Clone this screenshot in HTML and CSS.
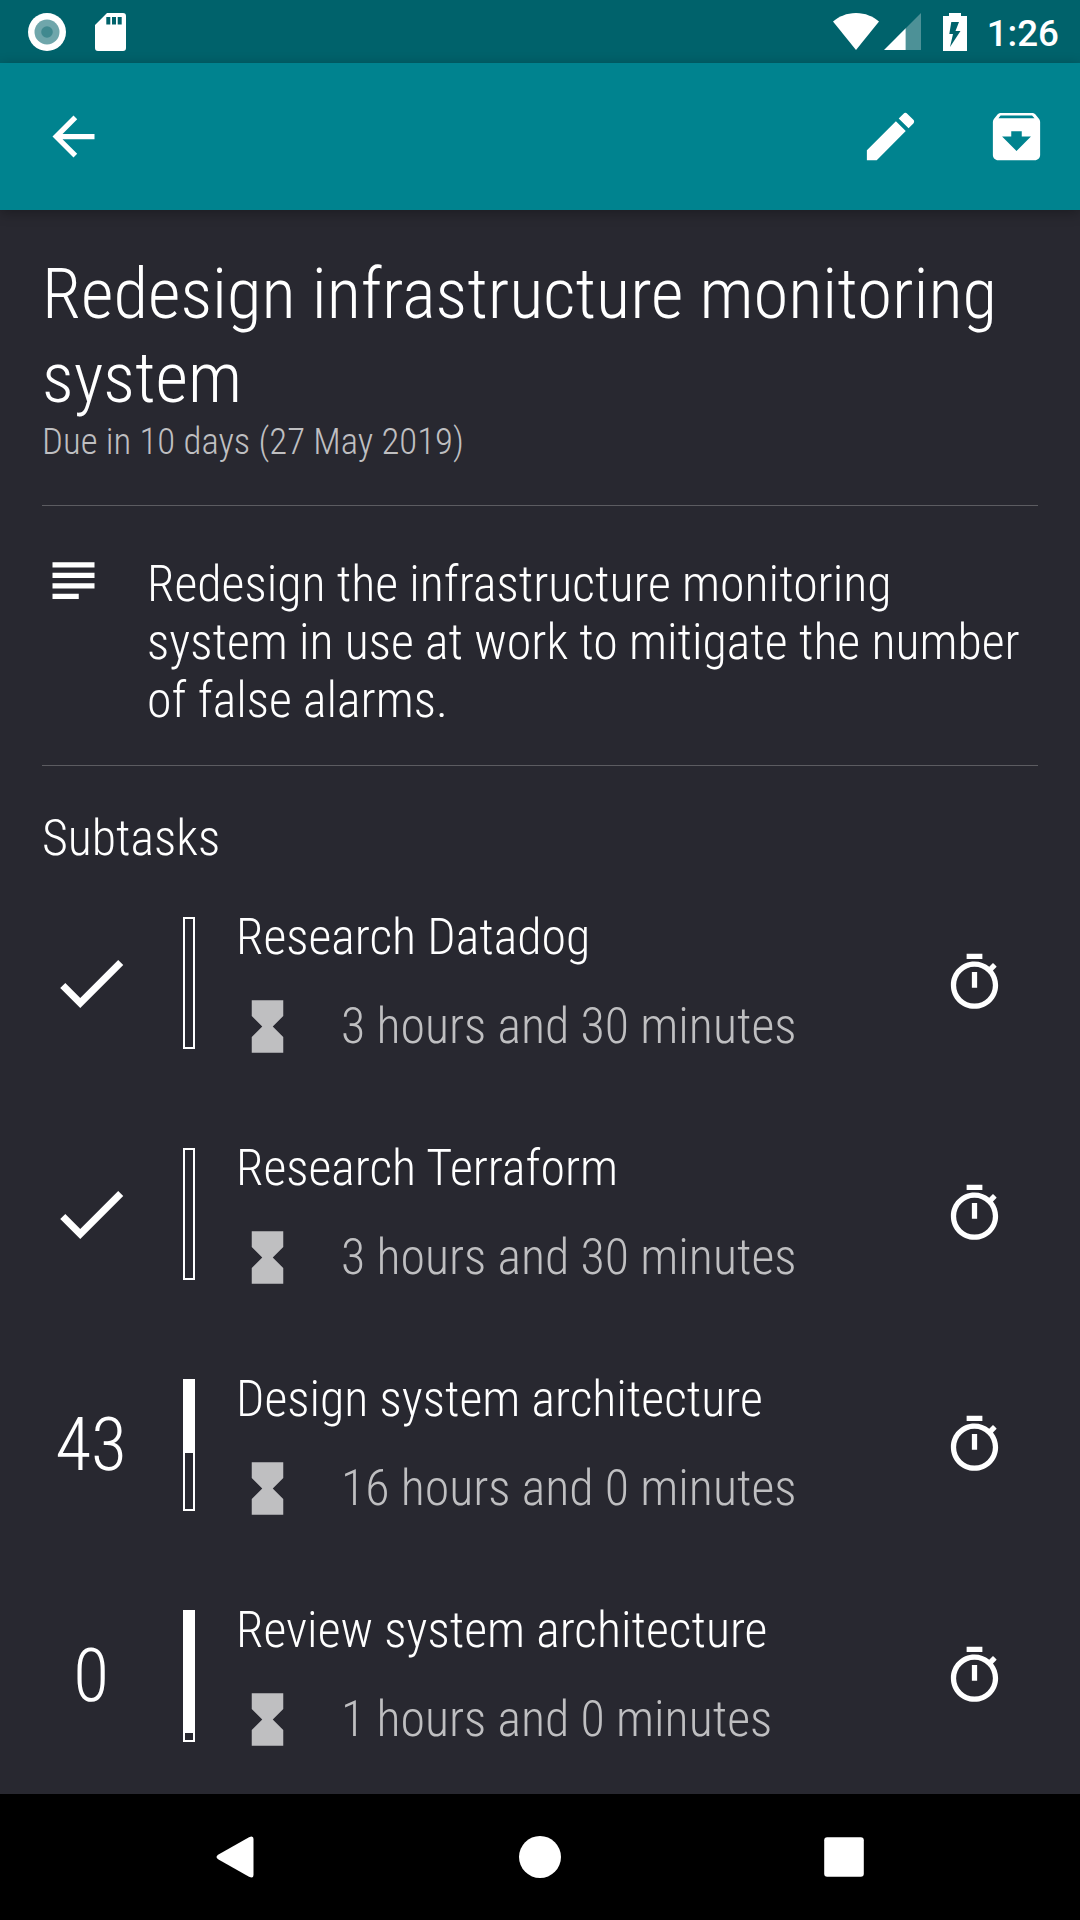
FILE: index.html
```html
<!DOCTYPE html>
<html lang="en">
<head>
<meta charset="utf-8">
<title>Task details</title>
<link rel="stylesheet" href="styles.css">
</head>
<body>
<svg class="defs" aria-hidden="true">
  <symbol id="check" viewBox="0 0 24 24"><path d="M9 16.17L4.83 12l-1.42 1.41L9 19 21 7l-1.41-1.41z"/></symbol>
  <symbol id="hourglass" viewBox="0 0 24 24"><path d="M6 2v6h.01L6 8.01 10 12l-4 4 .01.01H6V22h12v-5.99h-.01L18 16l-4-4 4-3.99-.01-.01H18V2z"/></symbol>
  <symbol id="timer" viewBox="0 0 24 24"><path d="M15 1H9v2h6V1zm-4 13h2V8h-2v6zm8.03-6.61l1.42-1.42c-.43-.51-.9-.99-1.41-1.41l-1.42 1.42C16.07 4.74 14.12 4 12 4c-4.97 0-9 4.03-9 9s4.02 9 9 9 9-4.03 9-9c0-2.12-.74-4.07-1.97-5.61zM12 20c-3.87 0-7-3.13-7-7s3.13-7 7-7 7 3.13 7 7-3.13 7-7 7z"/></symbol>
</svg>

<div class="statusbar">
  <svg class="st-record" viewBox="0 0 38 38"><circle cx="19" cy="19" r="19"/><circle class="ring" cx="19" cy="19" r="12.5"/><circle class="dot" cx="19" cy="19" r="5.8"/></svg>
  <svg class="st-sd" viewBox="0 0 31 38"><path fill-rule="evenodd" d="M12 0H28a3 3 0 0 1 3 3V35a3 3 0 0 1-3 3H3a3 3 0 0 1-3-3V12ZM11.3 4v7.5h4V4ZM17 4v7.5h4V4ZM22.700 4v7.500h4V4Z"/></svg>
  <span class="spacer"></span>
  <svg class="st-wifi" viewBox="0 0 46 37"><path d="M23 37L0 8.500C6 3.500 13.500 0 23 0S40 3.500 46 8.500Z"/></svg>
  <svg class="st-signal" viewBox="0 0 37 37"><path class="faint" d="M37 0V37H21.500V15.500Z"/><path d="M21.700 15.300V37H0Z"/></svg>
  <svg class="st-battery" viewBox="0 0 24 38"><path fill-rule="evenodd" d="M6 0H18V3H24V38H0V3H6ZM8.300 9L6.300 21H10L7 34L17.500 18H12.500L16 9Z"/></svg>
  <span class="clock">1:26</span>
</div>

<header class="appbar">
  <svg class="icon" viewBox="0 0 24 24"><path d="M20 11H7.830l5.590-5.590L12 4l-8 8 8 8 1.410-1.410L7.830 13H20v-2z"/></svg>
  <span class="spacer"></span>
  <svg class="icon" viewBox="0 0 24 24"><path d="M3 17.250V21h3.750L17.810 9.940l-3.750-3.750L3 17.250zM20.710 7.040c.39-.39.39-1.020 0-1.410l-2.340-2.340c-.39-.39-1.020-.39-1.410 0l-1.830 1.830 3.750 3.750 1.830-1.830z"/></svg>
  <svg class="icon archive" viewBox="0 0 24 24"><path d="M20.540 5.230l-1.390-1.680C18.880 3.210 18.470 3 18 3H6c-.47 0-.88.21-1.160.55L3.460 5.230C3.170 5.570 3 6.020 3 6.500V19c0 1.100.9 2 2 2h14c1.100 0 2-.9 2-2V6.500c0-.48-.17-.93-.46-1.270zM12 17.500L6.500 12H10v-2h4v2h3.500L12 17.500zM5.120 5l.81-1h12l.94 1H5.120z"/></svg>
</header>

<main class="content">
  <section class="heading">
    <h1>Redesign infrastructure monitoring system</h1>
    <p class="due">Due in 10 days (27 May 2019)</p>
  </section>

  <section class="description">
    <svg class="icon" viewBox="0 0 24 24"><path d="M4 5h16v2H4zM4 9h16v2H4zM4 13h16v2H4zM4 17h10v2H4z"/></svg>
    <p>Redesign the infrastructure monitoring system in use at work to mitigate the number of false alarms.</p>
  </section>

  <section class="subtasks">
    <h2>Subtasks</h2>
    <ul>
      <li class="task">
        <div class="state"><svg class="check"><use href="#check"/></svg></div>
        <div class="bar"><div class="fill" style="height:0%"></div></div>
        <div class="info">
          <p class="name">Research Datadog</p>
          <p class="time"><svg class="icon"><use href="#hourglass"/></svg>3 hours and 30 minutes</p>
        </div>
        <svg class="icon"><use href="#timer"/></svg>
      </li>
      <li class="task">
        <div class="state"><svg class="check"><use href="#check"/></svg></div>
        <div class="bar"><div class="fill" style="height:0%"></div></div>
        <div class="info">
          <p class="name">Research Terraform</p>
          <p class="time"><svg class="icon"><use href="#hourglass"/></svg>3 hours and 30 minutes</p>
        </div>
        <svg class="icon"><use href="#timer"/></svg>
      </li>
      <li class="task">
        <div class="state">43</div>
        <div class="bar"><div class="fill" style="height:57%"></div></div>
        <div class="info">
          <p class="name">Design system architecture</p>
          <p class="time"><svg class="icon"><use href="#hourglass"/></svg>16 hours and 0 minutes</p>
        </div>
        <svg class="icon"><use href="#timer"/></svg>
      </li>
      <li class="task">
        <div class="state">0</div>
        <div class="bar"><div class="fill" style="height:95%"></div></div>
        <div class="info">
          <p class="name">Review system architecture</p>
          <p class="time"><svg class="icon"><use href="#hourglass"/></svg>1 hours and 0 minutes</p>
        </div>
        <svg class="icon"><use href="#timer"/></svg>
      </li>
    </ul>
  </section>
</main>

<nav class="navbar">
  <svg viewBox="0 0 42 42"><path d="M3.500 18.500L34 1.200Q38.500-1 38.500 3V39Q38.500 43 34 40.800L3.500 23.500Q-.5 21 3.500 18.500Z"/></svg>
  <svg viewBox="0 0 42 42"><circle cx="21" cy="21" r="21"/></svg>
  <svg viewBox="0 0 42 42"><rect x="1.200" y="1.200" width="39.600" height="39.600" rx="3"/></svg>
</nav>
</body>
</html>
```
FILE: styles.css
```css
* { box-sizing: border-box; margin: 0; padding: 0; }

body {
  width: 1080px;
  height: 1920px;
  display: flex;
  flex-direction: column;
  overflow: hidden;
  background: #282830;
  color: #fff;
  font-family: "Roboto Condensed", Roboto, sans-serif;
  font-weight: 300;
  font-stretch: 75%;
}

svg { display: block; flex: none; fill: currentColor; }
.defs { display: none; }
.spacer { flex: 1; }
.icon { width: 63px; height: 63px; }

/* System status bar */
.statusbar {
  height: 63px;
  flex: none;
  display: flex;
  align-items: center;
  padding: 0 21px 0 28px;
  background: #00626b;
}
.st-record { width: 38px; height: 38px; }
.st-record .ring { fill: #6fa6ab; }
.st-record .dot { fill: #40898f; }
.st-sd { width: 31px; height: 38px; margin-left: 29px; }
.st-wifi { width: 46px; height: 37px; }
.st-signal { width: 37px; height: 37px; margin-left: 5px; }
.st-signal .faint { fill-opacity: .3; }
.st-battery { width: 24px; height: 38px; margin-left: 22px; }
.clock {
  margin-left: 20px;
  font: 500 36.750px/63px Roboto, sans-serif;
  font-stretch: 100%;
  padding-top: 3px;
}

/* App bar */
.appbar {
  height: 147px;
  flex: none;
  display: flex;
  align-items: center;
  padding: 0 32px 0 42px;
  background: #00838f;
  box-shadow: 0 3px 12px rgba(0, 0, 0, .3);
  z-index: 1;
}
.archive { margin-left: 63px; }

/* Task details */
.content { flex: 1; padding: 0 42px; }

.heading {
  height: 296px;
  padding-top: 42px;
  border-bottom: 1px solid #5c5c61;
}
h1 { font-size: 70.875px; font-weight: 300; line-height: 84px; }
.due { font-size: 36.750px; line-height: 43px; color: #bfbfc1; }

.description {
  height: 260px;
  display: flex;
  gap: 42px;
  padding-top: 43px;
  border-bottom: 1px solid #5c5c61;
}
.description p { width: 891px; flex: none; font-size: 49.875px; line-height: 58px; padding-top: 6px; }

h2 { font-size: 49.875px; font-weight: 300; line-height: 58px; padding-top: 43px; }
.subtasks ul { list-style: none; }
.task {
  height: 231px;
  display: flex;
  align-items: center;
  padding-right: 32px;
}
.state {
  width: 98px;
  display: flex;
  justify-content: center;
  font-size: 73.500px;
  line-height: 86px;
}
.check { width: 86px; height: 86px; }
.bar { width: 12px; height: 132px; margin-left: 43px; border: 2px solid #fff; }
.fill { background: #fff; }
.info {
  flex: 1;
  margin-left: 41px;
  font-size: 49.875px;
  line-height: 58px;
}
.time { display: flex; align-items: center; gap: 42px; margin-top: 29px; color: #bfbfc1; }

/* System navigation */
.navbar {
  height: 126px;
  flex: none;
  display: flex;
  justify-content: space-between;
  align-items: center;
  padding: 0 215px;
  background: #000;
}
.navbar svg { width: 42px; height: 42px; }
```
